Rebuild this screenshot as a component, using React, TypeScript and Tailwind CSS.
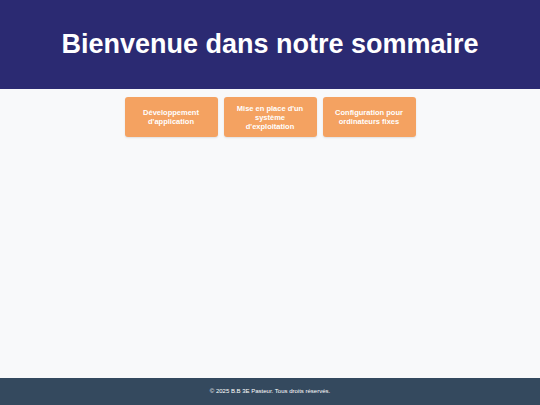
export default function App() {
  const cards = [
    "Développement d'application",
    "Mise en place d'un système d'exploitation",
    "Configuration pour ordinateurs fixes",
  ];
  return (
    <div className="flex min-h-screen flex-col bg-[#f8f9fa] font-['Liberation_Sans',Arial,sans-serif]">
      <header className="flex h-[89px] items-center justify-center bg-[#2b2a72]">
        <h1 className="text-[27px] font-bold leading-none text-white">Bienvenue dans notre sommaire</h1>
      </header>
      <main className="flex-1">
        <div className="mt-[8px] flex justify-center gap-[6px]">
          {cards.map((c) => (
            <div
              key={c}
              className="flex min-h-[40px] w-[93px] items-center justify-center rounded-[3px] bg-[#f4a261] px-[10px] py-[4px] text-center text-[7.5px] font-bold leading-[9px] text-white shadow-[0_1px_2px_rgba(0,0,0,0.1)]"
            >
              {c}
            </div>
          ))}
        </div>
      </main>
      <footer className="flex h-[27px] items-center justify-center bg-[#34495e] text-[6px] text-white">
        © 2025 B.B 3E Pasteur. Tous droits réservés.
      </footer>
    </div>
  );
}
